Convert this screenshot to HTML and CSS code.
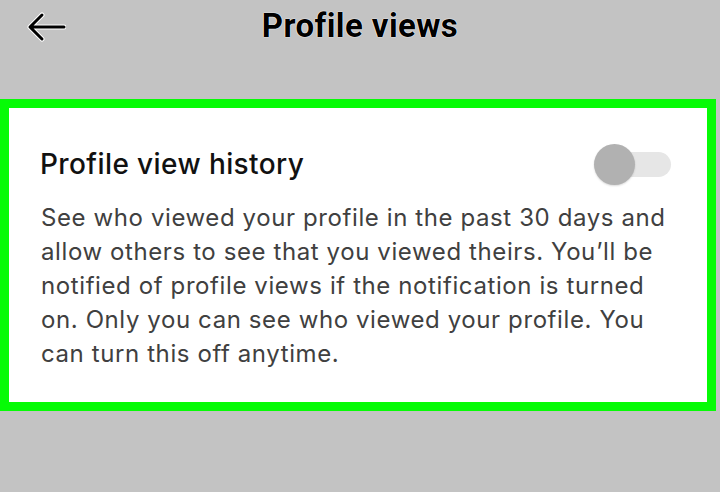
FILE: index.html
```html
<!DOCTYPE html>
<html lang="en">
<head>
    <meta charset="UTF-8">
    <meta name="viewport" content="width=device-width, initial-scale=1.0">
    <title>Profile views</title>
    <link rel="stylesheet" href="styles.css">
</head>
<body>
    <header class="top-bar">
        <button class="back-btn" aria-label="Back">
            <svg width="40" height="32" viewBox="0 0 40 32">
                <path class="halo" d="M38 16H4M16 4L4 16L16 28"/>
                <path class="line" d="M38 16H4M16 4L4 16L16 28"/>
            </svg>
        </button>
        <h1 class="page-title">Profile views</h1>
    </header>

    <!-- setting card -->
    <section class="setting-card">
        <div class="setting-head">
            <h2 class="setting-title">Profile view history</h2>
            <div class="switch">
                <span class="switch-track"></span>
                <span class="switch-knob"></span>
            </div>
        </div>
        <p class="setting-desc">
            See who viewed your profile in the past 30 days and allow others to see that you viewed theirs. You’ll be notified of profile views if the notification is turned on. Only you can see who viewed your profile. You can turn this off anytime.
        </p>
    </section>
</body>
</html>
```

FILE: styles.css
```css
body {
    margin: 0;
    padding: 0;
    background: #c3c3c3;
    font-family: Inter, "Noto Sans", sans-serif;
    height: 492px;
    overflow: hidden;
}
.top-bar {
    position: relative;
    height: 99px;
    display: flex;
    justify-content: center;
}
.back-btn {
    position: absolute;
    left: 26px;
    top: 11px;
    padding: 0;
    border: none;
    background: none;
}
.back-btn svg {
    display: block;
}
.back-btn .halo {
    fill: none;
    stroke: #fff;
    stroke-width: 5;
    stroke-linecap: round;
    stroke-linejoin: round;
}
.back-btn .line {
    fill: none;
    stroke: #000;
    stroke-width: 3;
    stroke-linecap: round;
    stroke-linejoin: round;
}
.page-title {
    margin: 7px 0 0;
    font-family: Roboto, "Liberation Sans", sans-serif;
    font-size: 33px;
    font-weight: bold;
    letter-spacing: 0.4px;
    color: #000;
    line-height: 38px;
    text-shadow: 0 0 1px #fff, 0 0 1px #fff, 0 0 1px #fff;
}
.setting-card {
    width: 698px;
    height: 294px;
    box-sizing: content-box;
    border: 9px solid #06fb06;
    background: #fff;
    padding: 0;
}
.setting-head {
    display: flex;
    align-items: center;
    justify-content: space-between;
    padding: 35px 36px 0 31px;
    height: 42px;
}
.setting-title {
    margin: 0;
    font-size: 28px;
    font-weight: 500;
    letter-spacing: 0.4px;
    color: #111;
}
.switch {
    position: relative;
    width: 77px;
    height: 41px;
}
.switch-track {
    position: absolute;
    right: 0;
    top: 8px;
    width: 58px;
    height: 25px;
    border-radius: 13px;
    background: #e6e6e6;
}
.switch-knob {
    position: absolute;
    left: 0;
    top: 0;
    width: 41px;
    height: 41px;
    border-radius: 50%;
    background: #b1b1b1;
    box-shadow: 0 1px 2px rgba(0,0,0,0.15);
}
.setting-desc {
    margin: 16px 36px 0 32px;
    font-size: 24px;
    font-weight: 400;
    letter-spacing: 0.6px;
    line-height: 34px;
    color: #404040;
}
```
